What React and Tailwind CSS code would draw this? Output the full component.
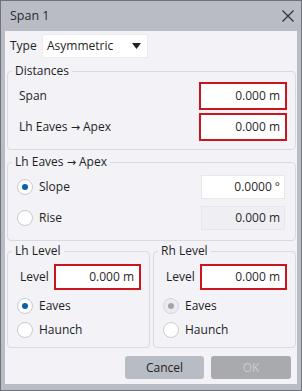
import React from "react";

const font = { fontFamily: '"Open Sans", "Noto Sans", sans-serif' };

function Arrow() {
  return <span style={{ fontFamily: '"DejaVu Sans", sans-serif' }} className="text-[11px]">→</span>;
}

function Radio({ checked, disabled }) {
  return (
    <span
      className={
        "w-4 h-4 rounded-full border flex items-center justify-center shrink-0 " +
        (disabled ? "bg-[#ececf0] border-[#d4d5dc]" : "bg-white border-[#c9cad2]")
      }
    >
      {checked && (
        <span
          className={
            "w-[6px] h-[6px] rounded-full " +
            (disabled ? "bg-[#a3a4aa]" : "bg-[#0d5ea8]")
          }
        />
      )}
    </span>
  );
}

function RedInput({ value }) {
  return (
    <div className="w-[88px] h-[28px] border-2 border-[#c8151e] bg-white flex items-center justify-end pr-[5px] text-[#2a2a2a]">
      {value}
    </div>
  );
}

function Group({ title, className, inner, children }) {
  return (
    <fieldset className={"border border-[#d9dae2] rounded-[4px] " + className}>
      <legend className="ml-[4px] px-[3px] leading-4 text-[#1f1f1f]">{title}</legend>
      <div className={inner}>{children}</div>
    </fieldset>
  );
}

export default function App() {
  return (
    <div
      className="w-[302px] h-[391px] bg-[#b9bcc5] border border-[#70737c] flex flex-col text-[12px] text-[#1f1f1f]"
      style={font}
    >
      <div className="h-[30px] shrink-0 flex items-center justify-between pl-[9px] pr-[7px]">
        <span className="text-[12.5px] text-[#2a2a2a]">Span 1</span>
        <svg width="12" height="12" viewBox="0 0 12 12">
          <path d="M0.5 0.5 L11.5 11.5 M11.5 0.5 L0.5 11.5" stroke="#2f3138" strokeWidth="1.2" />
        </svg>
      </div>
      <div className="mx-[4px] mb-[6px] flex-1 bg-[#f2f2f7] flex flex-col pt-[3px]">
        <div className="flex items-center pl-[5px]">
          <span className="w-[32px]">Type</span>
          <div className="w-[106px] h-[24px] bg-white border border-[#ebebf0] flex items-center justify-between pl-[4px] pr-[6px]">
            <span>Asymmetric</span>
            <svg width="9" height="6" viewBox="0 0 9 6">
              <path d="M0 0 H9 L4.5 6 Z" fill="#222" />
            </svg>
          </div>
        </div>

        <Group title="Distances" className="mt-[5px] ml-[2px] mr-[1px]" inner="pl-[11px] pr-[8px] pt-[3px] pb-[8px] flex flex-col gap-[3px]">
          <div className="flex items-center justify-between">
            <span>Span</span>
            <RedInput value="0.000 m" />
          </div>
          <div className="flex items-center justify-between">
            <span>Lh Eaves <Arrow /> Apex</span>
            <RedInput value="0.000 m" />
          </div>
        </Group>

        <Group
          title={<>Lh Eaves <Arrow /> Apex</>}
          className="mt-[4px] ml-[2px] mr-[1px]"
          inner="pl-[9px] pr-[10px] pt-[4px] pb-[10px] flex flex-col gap-[7px]"
        >
          <div className="flex items-center justify-between">
            <div className="flex items-center gap-[6px]">
              <Radio checked />
              <span>Slope</span>
            </div>
            <div className="w-[84px] h-[24px] bg-white border border-[#e6e6ec] flex items-center justify-end pr-[4px] text-[#2a2a2a]">
              0.0000 °
            </div>
          </div>
          <div className="flex items-center justify-between">
            <div className="flex items-center gap-[6px]">
              <Radio />
              <span>Rise</span>
            </div>
            <div className="w-[84px] h-[24px] bg-[#efeff3] border border-[#e6e6ec] flex items-center justify-end pr-[4px] text-[#2a2a2a]">
              0.000 m
            </div>
          </div>
        </Group>

        <div className="mt-[2px] ml-[2px] mr-[1px] grid grid-cols-2 gap-[3px]">
          {[
            { t: "Lh Level", dis: false },
            { t: "Rh Level", dis: true },
          ].map((g) => (
            <Group key={g.t} title={g.t} className="" inner="pl-[12px] pr-[8px] pt-[5px] pb-[9px]">
              <div className="flex items-center justify-between">
                <span>Level</span>
                <div className="w-[87px] h-[26px] border-2 border-[#c8151e] bg-white flex items-center justify-end pr-[5px] text-[#2a2a2a]">
                  0.000 m
                </div>
              </div>
              <div className="flex flex-col gap-[8px] mt-[8px] -ml-[3px] leading-4">
                <div className="flex items-center gap-[6px] h-4">
                  <Radio checked disabled={g.dis} />
                  <span>Eaves</span>
                </div>
                <div className="flex items-center gap-[6px] h-4">
                  <Radio />
                  <span>Haunch</span>
                </div>
              </div>
            </Group>
          ))}
        </div>

        <div className="mt-auto mb-[5px] flex justify-end gap-[7px] pr-[6px]">
          <button className="w-[79px] h-[23px] rounded-[3px] bg-[#b8bcc5] text-[#222]">Cancel</button>
          <button className="w-[80px] h-[23px] rounded-[3px] bg-[#a9aaae] text-[#c9cacd]">OK</button>
        </div>
      </div>
    </div>
  );
}
